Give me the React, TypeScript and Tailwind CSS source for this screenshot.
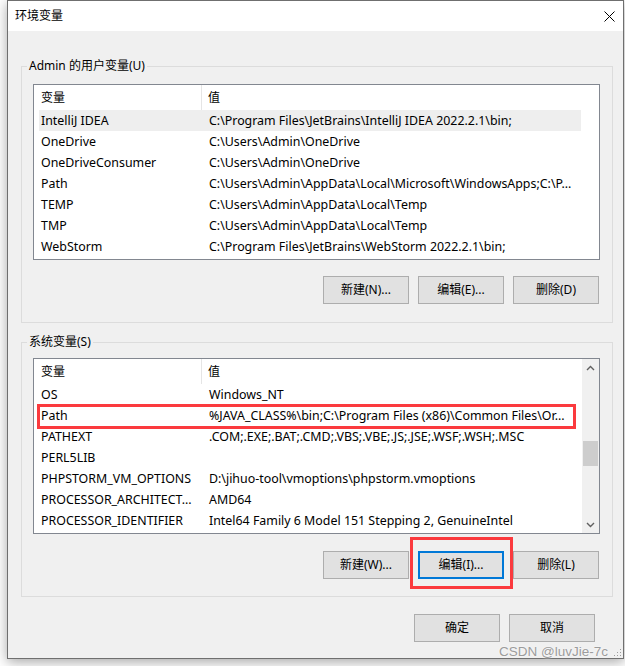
import type { ReactNode } from 'react'

type EnvRow = { name: string; value: string }

const USER_VARS: EnvRow[] = [
  { name: 'IntelliJ IDEA', value: 'C:\\Program Files\\JetBrains\\IntelliJ IDEA 2022.2.1\\bin;' },
  { name: 'OneDrive', value: 'C:\\Users\\Admin\\OneDrive' },
  { name: 'OneDriveConsumer', value: 'C:\\Users\\Admin\\OneDrive' },
  { name: 'Path', value: 'C:\\Users\\Admin\\AppData\\Local\\Microsoft\\WindowsApps;C:\\P...' },
  { name: 'TEMP', value: 'C:\\Users\\Admin\\AppData\\Local\\Temp' },
  { name: 'TMP', value: 'C:\\Users\\Admin\\AppData\\Local\\Temp' },
  { name: 'WebStorm', value: 'C:\\Program Files\\JetBrains\\WebStorm 2022.2.1\\bin;' },
]

const SYSTEM_VARS: EnvRow[] = [
  { name: 'OS', value: 'Windows_NT' },
  { name: 'Path', value: '%JAVA_CLASS%\\bin;C:\\Program Files (x86)\\Common Files\\Or...' },
  { name: 'PATHEXT', value: '.COM;.EXE;.BAT;.CMD;.VBS;.VBE;.JS;.JSE;.WSF;.WSH;.MSC' },
  { name: 'PERL5LIB', value: '' },
  { name: 'PHPSTORM_VM_OPTIONS', value: 'D:\\jihuo-tool\\vmoptions\\phpstorm.vmoptions' },
  { name: 'PROCESSOR_ARCHITECT...', value: 'AMD64' },
  { name: 'PROCESSOR_IDENTIFIER', value: 'Intel64 Family 6 Model 151 Stepping 2, GenuineIntel' },
]

export default function App() {
  return (
    <div className="relative h-[666px] w-[625px] overflow-hidden bg-white font-['Noto_Sans','Noto_Sans_CJK_SC',sans-serif] text-[12px] text-black">
      <div className="ml-[7px] flex h-[659px] w-[617px] flex-col border border-[#6f6f6f] bg-[#f0f0f0] shadow-[0_3px_12px_rgba(0,0,0,0.35)]">
        <div className="flex h-[30px] shrink-0 items-center justify-between bg-white pl-[7px] pr-[8px]">
          <span>环境变量</span>
          <svg width="11" height="11" viewBox="0 0 11 11" aria-hidden="true">
            <path d="M0.5 0.5 L10.5 10.5 M10.5 0.5 L0.5 10.5" stroke="#000" strokeWidth="1" />
          </svg>
        </div>

        <GroupBox className="mt-[27px]" title="Admin 的用户变量(U)" topGap="pt-[10px]" bottomGap="pb-[18px]">
          <ListBox rows={USER_VARS} selected={0} />
          <div className="mt-[16px] mr-[1px] flex justify-end gap-[9px]">
            <WinButton>新建(N)...</WinButton>
            <WinButton>编辑(E)...</WinButton>
            <WinButton>删除(D)</WinButton>
          </div>
        </GroupBox>

        <GroupBox className="mt-[11px]" title="系统变量(S)" topGap="pt-[8px]" bottomGap="pb-[17px]">
          <ListBox rows={SYSTEM_VARS} highlight={1} scrollbar />
          <div className="mt-[17px] mr-[1px] flex justify-end gap-[9px]">
            <WinButton>新建(W)...</WinButton>
            <div className="relative">
              <WinButton focused>编辑(I)...</WinButton>
              <div className="pointer-events-none absolute left-[-8px] top-[-14px] h-[52px] w-[103px] border-[3px] border-[#fb3a3e]" />
            </div>
            <WinButton>删除(L)</WinButton>
          </div>
        </GroupBox>

        <div className="mt-[17px] flex justify-end gap-[9px] pr-[28px]">
          <WinButton>确定</WinButton>
          <WinButton>取消</WinButton>
        </div>
      </div>

      <div className="absolute right-[17px] top-[644px] font-['Liberation_Sans',sans-serif] text-[13.5px] leading-[15px] text-[#9c9c9c] [text-shadow:0_0_2px_#fff]">
        CSDN @luvJie-7c
      </div>
      <svg className="absolute left-[613px] top-[648px]" width="9" height="9" viewBox="0 0 9 9" aria-hidden="true">
        <rect x="7" y="1" width="1" height="1" fill="#9c9c9c" />
        <rect x="4" y="4" width="1" height="1" fill="#9c9c9c" />
        <rect x="7" y="4" width="1" height="1" fill="#9c9c9c" />
        <rect x="1" y="7" width="1" height="1" fill="#9c9c9c" />
        <rect x="4" y="7" width="1" height="1" fill="#9c9c9c" />
        <rect x="7" y="7" width="1" height="1" fill="#9c9c9c" />
      </svg>
    </div>
  )
}

function GroupBox({
  title,
  className,
  topGap,
  bottomGap,
  children,
}: {
  title: string
  className: string
  topGap: string
  bottomGap: string
  children: ReactNode
}) {
  return (
    <fieldset className={`ml-[13px] w-[592px] border border-[#dcdcdc] pl-[11px] pr-[12px] ${className} ${bottomGap}`}>
      <legend className="ml-[-6px] px-[2px] leading-[16px]">{title}</legend>
      <div className={topGap}>{children}</div>
    </fieldset>
  )
}

function ListBox({
  rows,
  selected,
  highlight,
  scrollbar,
}: {
  rows: EnvRow[]
  selected?: number
  highlight?: number
  scrollbar?: boolean
}) {
  return (
    <div className="flex h-[176px] w-[567px] border border-[#828790] bg-white">
      <div className="w-[548px]">
        <div className="flex h-[25px] items-center">
          <div className="flex h-full w-[168px] items-center border-r border-[#e5e5e5] pl-[7px]">变量</div>
          <div className="pl-[6px]">值</div>
        </div>
        {rows.map((row, index) => (
          <div
            key={row.name}
            className={`relative ml-[5px] flex h-[21px] w-[542px] items-center whitespace-nowrap pt-[2px] text-[12.4px] ${
              index === selected ? 'bg-[#eeeeee]' : ''
            }`}
          >
            <div className="w-[163px] overflow-hidden pl-[2px]">{row.name}</div>
            <div className="pl-[7px]">{row.value}</div>
            {index === highlight ? (
              <div className="pointer-events-none absolute left-[-2px] top-[-1px] h-[25px] w-[539px] border-[3px] border-[#fb3a3e]" />
            ) : null}
          </div>
        ))}
      </div>
      {scrollbar ? <ScrollBar /> : null}
    </div>
  )
}

function ScrollBar() {
  return (
    <div className="flex w-[17px] flex-col bg-[#f0f0f0]">
      <div className="flex h-[17px] items-center justify-center">
        <svg width="9" height="6" viewBox="0 0 9 6" aria-hidden="true">
          <path d="M1 5 L4.5 1.5 L8 5" fill="none" stroke="#606060" strokeWidth="1.4" />
        </svg>
      </div>
      <div className="h-[65px]" />
      <div className="mx-auto h-[25px] w-[15px] bg-[#cdcdcd]" />
      <div className="flex-1" />
      <div className="flex h-[17px] items-center justify-center">
        <svg width="9" height="6" viewBox="0 0 9 6" aria-hidden="true">
          <path d="M1 1 L4.5 4.5 L8 1" fill="none" stroke="#606060" strokeWidth="1.4" />
        </svg>
      </div>
    </div>
  )
}

function WinButton({ children, focused }: { children: ReactNode; focused?: boolean }) {
  return (
    <button
      type="button"
      className={`flex h-[28px] w-[86px] items-center justify-center bg-[#e1e1e1] ${
        focused ? 'border-2 border-[#0078d7]' : 'border border-[#adadad]'
      }`}
    >
      {children}
    </button>
  )
}
